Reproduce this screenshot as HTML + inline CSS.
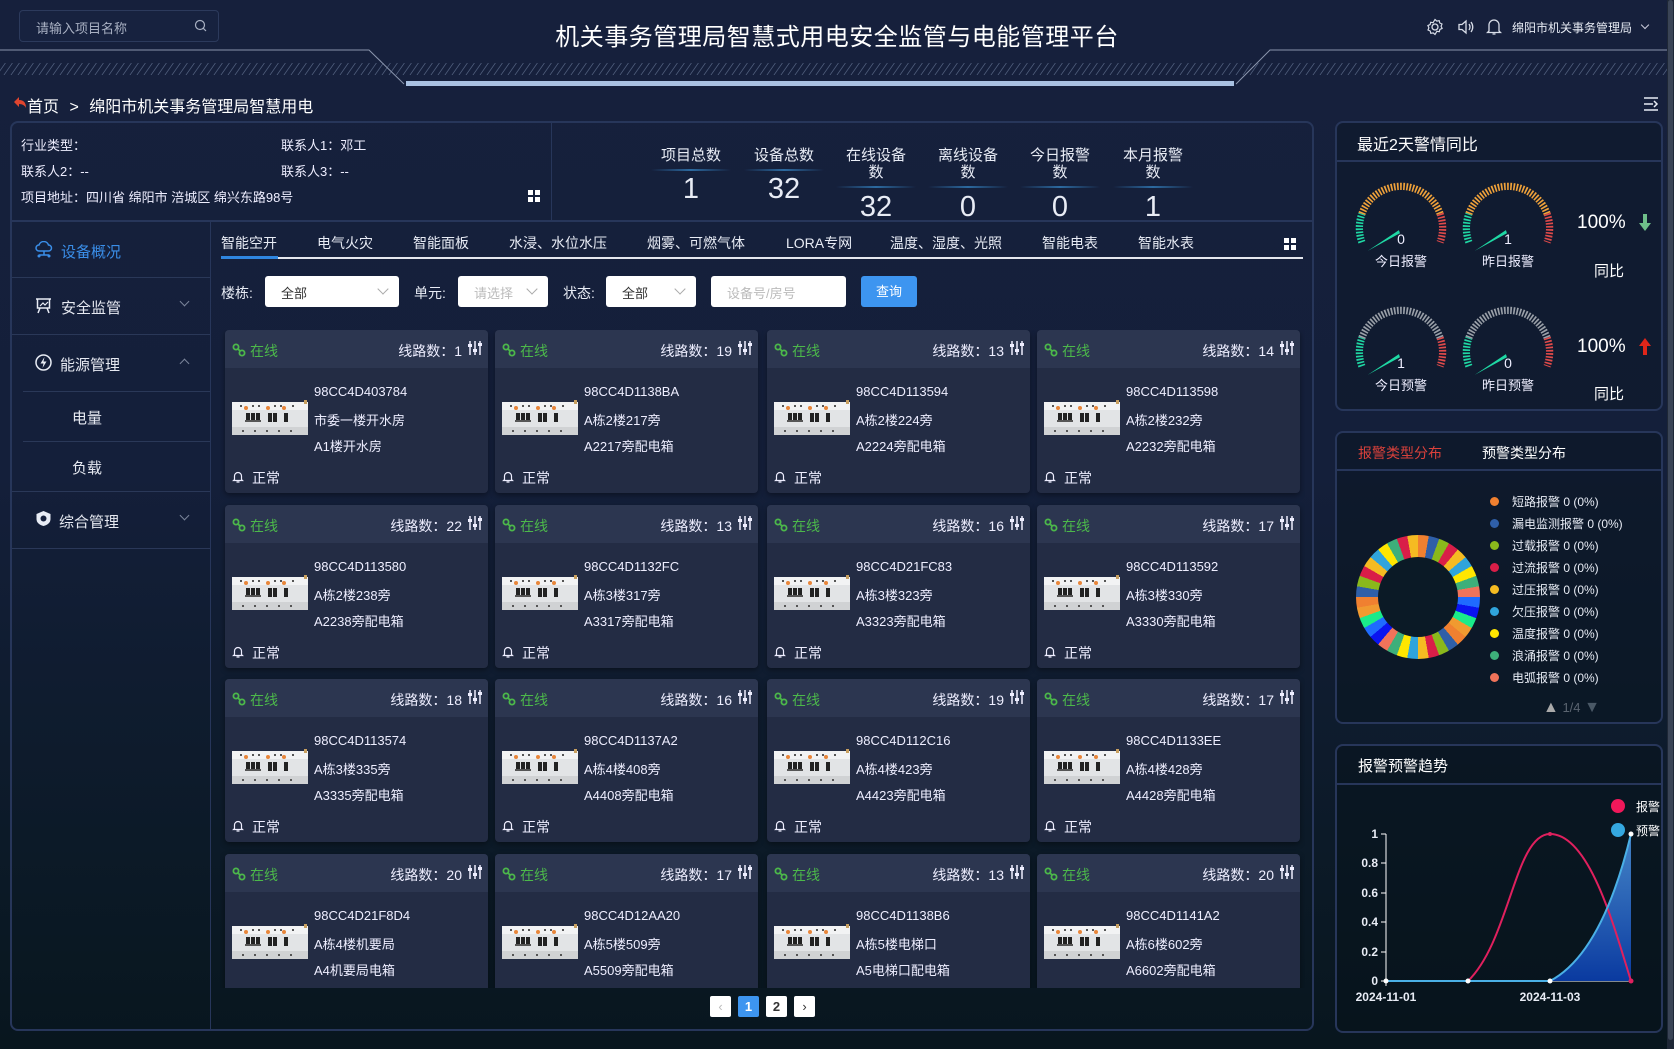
<!DOCTYPE html>
<html><head><meta charset="utf-8">
<style>
*{margin:0;padding:0;box-sizing:border-box}
body{width:1674px;height:1049px;overflow:hidden;font-family:"Liberation Sans","Noto Sans CJK SC",sans-serif;color:#fff;background:linear-gradient(180deg,#16203c 0%,#141f3a 45%,#0c1a28 80%,#08161e 100%);position:relative}
.a{position:absolute}
.search{left:19px;top:10px;width:200px;height:32px;border:1px solid #2c3a5c;border-radius:4px;background:#17223f;font-size:13px;color:#a9b1c3;padding:7px 0 0 16px}
.title{left:0;width:1674px;top:17px;text-align:center;font-size:24px;color:#fff;letter-spacing:0.5px}
.panel{border:2px solid #27365a;border-radius:8px}
.stat{width:90px;text-align:center;font-size:15px;line-height:17px;color:#e8ecf5}
.stat .n{position:absolute;left:0;width:90px;font-size:29px;font-family:"Liberation Sans Narrow","Liberation Sans",sans-serif}
.stat .ln{position:absolute;left:5px;width:80px;height:2px;background:linear-gradient(90deg,transparent,#2c6aa0,transparent)}
.side{font-size:15px;color:#e6e9f1}
.hr{height:1px;background:#2a3858}
.tab{font-size:14px;color:#e8ecf5;top:233px}
.sel{background:#fff;border-radius:3px;height:31px;top:276px;font-size:13px;color:#333;padding:7px 0 0 16px}
.sel i{position:absolute;right:12px;top:9px;width:8px;height:8px;border-right:1px solid #aaa;border-bottom:1px solid #aaa;transform:rotate(45deg)}
.lab{top:283px;font-size:14px;color:#e8ecf5}
.card{width:263px;height:163px;background:#232c44;border-radius:4px;box-shadow:0 2px 6px rgba(0,0,0,.4);overflow:hidden}
.card .h{height:38px;background:#2c3650;position:relative;font-size:14px}
.on{position:absolute;left:25px;top:11px;color:#4cb84a}
.lk{position:absolute;left:7px;top:13px}
.ln2{position:absolute;right:26px;top:11px;color:#eef}
.sl{position:absolute;right:6px;top:11px}
.card .t{position:absolute;left:89px;font-size:13px;color:#eef}
.brk{position:absolute;left:7px;top:70px;width:76px;height:38px}
.bell{position:absolute;left:7px;top:140px}
.st{position:absolute;left:27px;top:138px;font-size:14px;color:#eef}
.pg{top:996px;width:21px;height:21px;border-radius:2px;background:#fff;color:#333;font-size:13px;text-align:center;line-height:21px;font-weight:bold}
.leg{font-size:12px;color:#e8ecf5;left:1512px}
.dot{left:1490px;width:9px;height:9px;border-radius:50%}
.gl{font-size:13px;color:#eef;width:104px;text-align:center}
</style></head><body>

<svg class="a" style="left:0;top:0" width="1674" height="100">
<defs><pattern id="hp" width="7" height="14" patternUnits="userSpaceOnUse" patternTransform="skewX(-35)"><rect width="1" height="14" fill="#4d5b7a"/></pattern></defs>
<rect x="0" y="63" width="1674" height="12" fill="url(#hp)"/>
<polyline points="0,50 369,50 404,84" fill="none" stroke="#8a95ad" stroke-width="1"/>
<polyline points="1236,84 1270,50 1674,50" fill="none" stroke="#8a95ad" stroke-width="1"/>
<rect x="406" y="81" width="828" height="5" fill="#a9c1e2"/>
</svg>
<div class="a search">请输入项目名称</div>
<svg class="a" style="left:194px;top:19px" width="14" height="14" viewBox="0 0 14 14"><circle cx="6" cy="6" r="4.5" fill="none" stroke="#a9b1c3" stroke-width="1.2"/><line x1="9.3" y1="9.3" x2="12" y2="12" stroke="#a9b1c3" stroke-width="1.2"/></svg>
<div class="a title">机关事务管理局智慧式用电安全监管与电能管理平台</div>

<svg class="a" style="left:1426px;top:18px" width="18" height="18" viewBox="0 0 18 18"><circle cx="9" cy="9" r="3" fill="none" stroke="#d8dde8" stroke-width="1.3"/><path d="M9 1.5l1.8 1.6 2.4-.4.6 2.3 2.2 1-.9 2.2 1 2.2-2.2 1-.6 2.3-2.4-.4L9 16.5l-1.8-1.6-2.4.4-.6-2.3-2.2-1 .9-2.2-1-2.2 2.2-1 .6-2.3 2.4.4z" fill="none" stroke="#d8dde8" stroke-width="1.2"/></svg>
<svg class="a" style="left:1457px;top:18px" width="18" height="18" viewBox="0 0 18 18"><path d="M2 6.5h3l4-3.5v12l-4-3.5H2z" fill="none" stroke="#d8dde8" stroke-width="1.3"/><path d="M12 6q2 3 0 6M14 4q3.5 5 0 10" fill="none" stroke="#d8dde8" stroke-width="1.3"/></svg>
<svg class="a" style="left:1486px;top:17px" width="16" height="19" viewBox="0 0 16 19"><path d="M3 14V8a5 5 0 0110 0v6l1.5 1.5h-13z M6.5 17h3" fill="none" stroke="#d8dde8" stroke-width="1.3"/></svg>
<div class="a" style="left:1512px;top:19px;font-size:12px;color:#e8ecf5">绵阳市机关事务管理局</div>
<div class="a" style="left:1642px;top:22px;width:6px;height:6px;border-right:1px solid #ccd;border-bottom:1px solid #ccd;transform:rotate(45deg)"></div>
<div class="a" style="left:1667px;top:0;width:7px;height:1049px;background:#1e2736"></div>
<div class="a" style="left:1668px;top:0;width:5px;height:1040px;background:#3a4456;border-radius:3px"></div>

<svg class="a" style="left:13px;top:96px" width="14" height="13" viewBox="0 0 14 13"><path d="M6 1L1 6l5 5V8q5 0 7 4q0-8-7-8z" fill="#e0452f"/></svg>
<div class="a" style="left:27px;top:93px;font-size:16px;color:#fff">首页 <span style="margin:0 6px">&gt;</span> 绵阳市机关事务管理局智慧用电</div>
<svg class="a" style="left:1643px;top:97px" width="16" height="14"><path d="M1 1h14M1 7h9M1 13h14M11 4l3 3-3 3" fill="none" stroke="#e8ecf5" stroke-width="1.5"/></svg>

<div class="a panel" style="left:10px;top:121px;width:1304px;height:910px"></div>
<div class="a hr" style="left:11px;top:220px;width:1302px;height:2px;background:#27365a"></div>
<div class="a" style="left:551px;top:122px;width:1px;height:98px;background:#27365a"></div>
<div class="a" style="left:210px;top:221px;width:1px;height:808px;background:#27365a"></div>
<div class="a" style="left:21px;top:133px;font-size:13px;line-height:26px;color:#eef">行业类型：<br>联系人2：--<br>项目地址：四川省 绵阳市 涪城区 绵兴东路98号</div>
<div class="a" style="left:281px;top:133px;font-size:13px;line-height:26px;color:#eef">联系人1：邓工<br>联系人3：--</div>
<svg class="a" style="left:528px;top:190px" width="12" height="12"><rect x="0" y="0" width="5" height="5" fill="#fff"/><rect x="7" y="0" width="5" height="5" fill="#fff"/><rect x="0" y="7" width="5" height="5" fill="#fff"/><rect x="7" y="7" width="5" height="5" fill="#fff"/></svg>

<div class="a stat" style="left:646px;top:147px">项目总数<div class="ln" style="top:22px"></div><div class="n" style="top:34px">1</div></div>
<div class="a stat" style="left:739px;top:147px">设备总数<div class="ln" style="top:22px"></div><div class="n" style="top:34px">32</div></div>
<div class="a stat" style="left:831px;top:147px">在线设备<br>数<div class="ln" style="top:39px"></div><div class="n" style="top:52px">32</div></div>
<div class="a stat" style="left:923px;top:147px">离线设备<br>数<div class="ln" style="top:39px"></div><div class="n" style="top:52px">0</div></div>
<div class="a stat" style="left:1015px;top:147px">今日报警<br>数<div class="ln" style="top:39px"></div><div class="n" style="top:52px">0</div></div>
<div class="a stat" style="left:1108px;top:147px">本月报警<br>数<div class="ln" style="top:39px"></div><div class="n" style="top:52px">1</div></div>

<svg class="a" style="left:35px;top:241px" width="18" height="18" viewBox="0 0 18 18"><path d="M4 10a3 3 0 010-6 5 5 0 019.5 0 3 3 0 010 6z" fill="none" stroke="#3a8ee8" stroke-width="1.5"/><path d="M9 10v4M4 14h10" stroke="#3a8ee8" stroke-width="1.5"/><circle cx="4" cy="15" r="1.5" fill="#3a8ee8"/><circle cx="14" cy="15" r="1.5" fill="#3a8ee8"/></svg>
<div class="a side" style="left:61px;top:241px;color:#3a8ee8">设备概况</div>
<div class="a hr" style="left:12px;top:277px;width:198px"></div>
<svg class="a" style="left:35px;top:297px" width="17" height="17" viewBox="0 0 17 17"><path d="M1 2h15M2.5 2v9h12V2M5 11l-2 5M12 11l2 5" fill="none" stroke="#e8ecf5" stroke-width="1.5"/><path d="M5 9l3-3 2 2 3-3" fill="none" stroke="#e8ecf5" stroke-width="1.2"/></svg>
<div class="a side" style="left:61px;top:297px">安全监管</div>
<div class="a" style="left:181px;top:298px;width:7px;height:7px;border-right:1px solid #7a849a;border-bottom:1px solid #7a849a;transform:rotate(45deg)"></div>
<div class="a hr" style="left:12px;top:334px;width:198px"></div>
<svg class="a" style="left:34px;top:353px" width="19" height="19" viewBox="0 0 19 19"><circle cx="9.5" cy="9.5" r="7.5" fill="none" stroke="#e8ecf5" stroke-width="1.5"/><path d="M10.5 4L6.5 10.5h3l-1 4.5 4-6.5h-3z" fill="#e8ecf5"/></svg>
<div class="a side" style="left:60px;top:354px">能源管理</div>
<div class="a" style="left:181px;top:360px;width:7px;height:7px;border-left:1px solid #7a849a;border-top:1px solid #7a849a;transform:rotate(45deg)"></div>
<div class="a hr" style="left:23px;top:391px;width:187px"></div>
<div class="a side" style="left:72px;top:407px">电量</div>
<div class="a hr" style="left:23px;top:441px;width:187px"></div>
<div class="a side" style="left:72px;top:457px">负载</div>
<div class="a hr" style="left:12px;top:491px;width:198px"></div>
<svg class="a" style="left:35px;top:510px" width="17" height="17" viewBox="0 0 17 17"><path d="M8.5 1l7 3v5q0 5-7 7q-7-2-7-7V4z" fill="#e8ecf5"/><circle cx="8.5" cy="8.5" r="3" fill="#16213d"/></svg>
<div class="a side" style="left:59px;top:511px">综合管理</div>
<div class="a" style="left:181px;top:512px;width:7px;height:7px;border-right:1px solid #7a849a;border-bottom:1px solid #7a849a;transform:rotate(45deg)"></div>
<div class="a hr" style="left:12px;top:548px;width:198px"></div>

<div class="a tab" style="left:221px">智能空开</div>
<div class="a tab" style="left:317px">电气火灾</div>
<div class="a tab" style="left:413px">智能面板</div>
<div class="a tab" style="left:509px">水浸、水位水压</div>
<div class="a tab" style="left:647px">烟雾、可燃气体</div>
<div class="a tab" style="left:786px">LORA专网</div>
<div class="a tab" style="left:890px">温度、湿度、光照</div>
<div class="a tab" style="left:1042px">智能电表</div>
<div class="a tab" style="left:1138px">智能水表</div>
<svg class="a" style="left:1284px;top:238px" width="12" height="12"><rect x="0" y="0" width="5" height="5" fill="#fff"/><rect x="7" y="0" width="5" height="5" fill="#fff"/><rect x="0" y="7" width="5" height="5" fill="#fff"/><rect x="7" y="7" width="5" height="5" fill="#fff"/></svg>
<div class="a" style="left:221px;top:257px;width:1082px;height:2px;background:#e4e7ee"></div>
<div class="a" style="left:221px;top:256px;width:57px;height:3px;background:#2f86e0"></div>

<div class="a lab" style="left:221px">楼栋:</div>
<div class="a sel" style="left:265px;width:134px">全部<i></i></div>
<div class="a lab" style="left:414px">单元:</div>
<div class="a sel" style="left:458px;width:90px;color:#bbb">请选择<i></i></div>
<div class="a lab" style="left:563px">状态:</div>
<div class="a sel" style="left:606px;width:90px">全部<i></i></div>
<div class="a sel" style="left:711px;width:135px;color:#bbb">设备号/房号</div>
<div class="a" style="left:861px;top:276px;width:56px;height:31px;background:#3d95f0;border-radius:3px;font-size:13px;text-align:center;line-height:31px">查询</div>

<svg width="0" height="0" style="position:absolute">
<defs>
<symbol id="link" viewBox="0 0 14 14"><circle cx="4" cy="4" r="2.6" fill="none" stroke="#4cb84a" stroke-width="1.8"/><circle cx="10" cy="10" r="2.6" fill="none" stroke="#4cb84a" stroke-width="1.8"/><line x1="5.5" y1="5.5" x2="8.5" y2="8.5" stroke="#4cb84a" stroke-width="1.8"/></symbol>
<symbol id="sld" viewBox="0 0 14 14"><path d="M2 0v14M7 0v14M12 0v14" stroke="#eef" stroke-width="1.5"/><rect x="0" y="3" width="4" height="3" fill="#eef"/><rect x="5" y="8" width="4" height="3" fill="#eef"/><rect x="10" y="2" width="4" height="3" fill="#eef"/></symbol>
<symbol id="bl" viewBox="0 0 12 13"><path d="M2.5 9.5V6a3.5 3.5 0 017 0v3.5l1 1h-9z M4.5 12h3" fill="none" stroke="#eef" stroke-width="1.2"/></symbol>
<symbol id="br" viewBox="0 0 76 38"><rect x="0" y="2" width="76" height="33" rx="2" fill="#e2e4e6"/><rect x="0" y="2" width="76" height="8" fill="#f2f3f4"/><rect x="0" y="27" width="76" height="8" fill="#d0d2d4"/><g fill="#222"><rect x="14" y="13" width="4" height="9"/><rect x="19" y="13" width="4" height="9"/><rect x="24" y="13" width="4" height="9"/><rect x="36" y="13" width="4" height="9"/><rect x="41" y="13" width="4" height="9"/><rect x="52" y="13" width="4" height="9"/></g><rect x="13" y="20" width="16" height="2" fill="#555"/><circle cx="14" cy="8" r="2" fill="#e8863a"/><circle cx="36" cy="8" r="2" fill="#e8863a"/><circle cx="52" cy="8" r="2" fill="#e8863a"/><g fill="#555"><rect x="8" y="5" width="2" height="2"/><rect x="20" y="5" width="2" height="2"/><rect x="26" y="5" width="2" height="2"/><rect x="42" y="5" width="2" height="2"/><rect x="48" y="5" width="2" height="2"/><rect x="60" y="5" width="2" height="2"/><rect x="10" y="30" width="2" height="2"/><rect x="22" y="30" width="2" height="2"/><rect x="34" y="30" width="2" height="2"/><rect x="46" y="30" width="2" height="2"/><rect x="58" y="30" width="2" height="2"/></g><rect x="72" y="0" width="3" height="4" fill="#c8a060"/></symbol>
</defs></svg>

<div class="a" style="left:220px;top:330px;width:1085px;height:658px;overflow:hidden">
<div class="a card" style="left:5px;top:0"><div class="h"><svg class="lk" width="14" height="14"><use href="#link"/></svg><span class="on">在线</span><span class="ln2">线路数：1</span><svg class="sl" width="14" height="14"><use href="#sld"/></svg></div><svg class="brk"><use href="#br"/></svg><div class="t" style="top:54px">98CC4D403784</div><div class="t" style="top:80px">市委一楼开水房</div><div class="t" style="top:106px">A1楼开水房</div><svg class="bell" width="12" height="13"><use href="#bl"/></svg><div class="st">正常</div></div>
<div class="a card" style="left:275px;top:0"><div class="h"><svg class="lk" width="14" height="14"><use href="#link"/></svg><span class="on">在线</span><span class="ln2">线路数：19</span><svg class="sl" width="14" height="14"><use href="#sld"/></svg></div><svg class="brk"><use href="#br"/></svg><div class="t" style="top:54px">98CC4D1138BA</div><div class="t" style="top:80px">A栋2楼217旁</div><div class="t" style="top:106px">A2217旁配电箱</div><svg class="bell" width="12" height="13"><use href="#bl"/></svg><div class="st">正常</div></div>
<div class="a card" style="left:547px;top:0"><div class="h"><svg class="lk" width="14" height="14"><use href="#link"/></svg><span class="on">在线</span><span class="ln2">线路数：13</span><svg class="sl" width="14" height="14"><use href="#sld"/></svg></div><svg class="brk"><use href="#br"/></svg><div class="t" style="top:54px">98CC4D113594</div><div class="t" style="top:80px">A栋2楼224旁</div><div class="t" style="top:106px">A2224旁配电箱</div><svg class="bell" width="12" height="13"><use href="#bl"/></svg><div class="st">正常</div></div>
<div class="a card" style="left:817px;top:0"><div class="h"><svg class="lk" width="14" height="14"><use href="#link"/></svg><span class="on">在线</span><span class="ln2">线路数：14</span><svg class="sl" width="14" height="14"><use href="#sld"/></svg></div><svg class="brk"><use href="#br"/></svg><div class="t" style="top:54px">98CC4D113598</div><div class="t" style="top:80px">A栋2楼232旁</div><div class="t" style="top:106px">A2232旁配电箱</div><svg class="bell" width="12" height="13"><use href="#bl"/></svg><div class="st">正常</div></div>
<div class="a card" style="left:5px;top:175px"><div class="h"><svg class="lk" width="14" height="14"><use href="#link"/></svg><span class="on">在线</span><span class="ln2">线路数：22</span><svg class="sl" width="14" height="14"><use href="#sld"/></svg></div><svg class="brk"><use href="#br"/></svg><div class="t" style="top:54px">98CC4D113580</div><div class="t" style="top:80px">A栋2楼238旁</div><div class="t" style="top:106px">A2238旁配电箱</div><svg class="bell" width="12" height="13"><use href="#bl"/></svg><div class="st">正常</div></div>
<div class="a card" style="left:275px;top:175px"><div class="h"><svg class="lk" width="14" height="14"><use href="#link"/></svg><span class="on">在线</span><span class="ln2">线路数：13</span><svg class="sl" width="14" height="14"><use href="#sld"/></svg></div><svg class="brk"><use href="#br"/></svg><div class="t" style="top:54px">98CC4D1132FC</div><div class="t" style="top:80px">A栋3楼317旁</div><div class="t" style="top:106px">A3317旁配电箱</div><svg class="bell" width="12" height="13"><use href="#bl"/></svg><div class="st">正常</div></div>
<div class="a card" style="left:547px;top:175px"><div class="h"><svg class="lk" width="14" height="14"><use href="#link"/></svg><span class="on">在线</span><span class="ln2">线路数：16</span><svg class="sl" width="14" height="14"><use href="#sld"/></svg></div><svg class="brk"><use href="#br"/></svg><div class="t" style="top:54px">98CC4D21FC83</div><div class="t" style="top:80px">A栋3楼323旁</div><div class="t" style="top:106px">A3323旁配电箱</div><svg class="bell" width="12" height="13"><use href="#bl"/></svg><div class="st">正常</div></div>
<div class="a card" style="left:817px;top:175px"><div class="h"><svg class="lk" width="14" height="14"><use href="#link"/></svg><span class="on">在线</span><span class="ln2">线路数：17</span><svg class="sl" width="14" height="14"><use href="#sld"/></svg></div><svg class="brk"><use href="#br"/></svg><div class="t" style="top:54px">98CC4D113592</div><div class="t" style="top:80px">A栋3楼330旁</div><div class="t" style="top:106px">A3330旁配电箱</div><svg class="bell" width="12" height="13"><use href="#bl"/></svg><div class="st">正常</div></div>
<div class="a card" style="left:5px;top:349px"><div class="h"><svg class="lk" width="14" height="14"><use href="#link"/></svg><span class="on">在线</span><span class="ln2">线路数：18</span><svg class="sl" width="14" height="14"><use href="#sld"/></svg></div><svg class="brk"><use href="#br"/></svg><div class="t" style="top:54px">98CC4D113574</div><div class="t" style="top:80px">A栋3楼335旁</div><div class="t" style="top:106px">A3335旁配电箱</div><svg class="bell" width="12" height="13"><use href="#bl"/></svg><div class="st">正常</div></div>
<div class="a card" style="left:275px;top:349px"><div class="h"><svg class="lk" width="14" height="14"><use href="#link"/></svg><span class="on">在线</span><span class="ln2">线路数：16</span><svg class="sl" width="14" height="14"><use href="#sld"/></svg></div><svg class="brk"><use href="#br"/></svg><div class="t" style="top:54px">98CC4D1137A2</div><div class="t" style="top:80px">A栋4楼408旁</div><div class="t" style="top:106px">A4408旁配电箱</div><svg class="bell" width="12" height="13"><use href="#bl"/></svg><div class="st">正常</div></div>
<div class="a card" style="left:547px;top:349px"><div class="h"><svg class="lk" width="14" height="14"><use href="#link"/></svg><span class="on">在线</span><span class="ln2">线路数：19</span><svg class="sl" width="14" height="14"><use href="#sld"/></svg></div><svg class="brk"><use href="#br"/></svg><div class="t" style="top:54px">98CC4D112C16</div><div class="t" style="top:80px">A栋4楼423旁</div><div class="t" style="top:106px">A4423旁配电箱</div><svg class="bell" width="12" height="13"><use href="#bl"/></svg><div class="st">正常</div></div>
<div class="a card" style="left:817px;top:349px"><div class="h"><svg class="lk" width="14" height="14"><use href="#link"/></svg><span class="on">在线</span><span class="ln2">线路数：17</span><svg class="sl" width="14" height="14"><use href="#sld"/></svg></div><svg class="brk"><use href="#br"/></svg><div class="t" style="top:54px">98CC4D1133EE</div><div class="t" style="top:80px">A栋4楼428旁</div><div class="t" style="top:106px">A4428旁配电箱</div><svg class="bell" width="12" height="13"><use href="#bl"/></svg><div class="st">正常</div></div>
<div class="a card" style="left:5px;top:524px"><div class="h"><svg class="lk" width="14" height="14"><use href="#link"/></svg><span class="on">在线</span><span class="ln2">线路数：20</span><svg class="sl" width="14" height="14"><use href="#sld"/></svg></div><svg class="brk"><use href="#br"/></svg><div class="t" style="top:54px">98CC4D21F8D4</div><div class="t" style="top:80px">A栋4楼机要局</div><div class="t" style="top:106px">A4机要局电箱</div></div>
<div class="a card" style="left:275px;top:524px"><div class="h"><svg class="lk" width="14" height="14"><use href="#link"/></svg><span class="on">在线</span><span class="ln2">线路数：17</span><svg class="sl" width="14" height="14"><use href="#sld"/></svg></div><svg class="brk"><use href="#br"/></svg><div class="t" style="top:54px">98CC4D12AA20</div><div class="t" style="top:80px">A栋5楼509旁</div><div class="t" style="top:106px">A5509旁配电箱</div></div>
<div class="a card" style="left:547px;top:524px"><div class="h"><svg class="lk" width="14" height="14"><use href="#link"/></svg><span class="on">在线</span><span class="ln2">线路数：13</span><svg class="sl" width="14" height="14"><use href="#sld"/></svg></div><svg class="brk"><use href="#br"/></svg><div class="t" style="top:54px">98CC4D1138B6</div><div class="t" style="top:80px">A栋5楼电梯口</div><div class="t" style="top:106px">A5电梯口配电箱</div></div>
<div class="a card" style="left:817px;top:524px"><div class="h"><svg class="lk" width="14" height="14"><use href="#link"/></svg><span class="on">在线</span><span class="ln2">线路数：20</span><svg class="sl" width="14" height="14"><use href="#sld"/></svg></div><svg class="brk"><use href="#br"/></svg><div class="t" style="top:54px">98CC4D1141A2</div><div class="t" style="top:80px">A栋6楼602旁</div><div class="t" style="top:106px">A6602旁配电箱</div></div>
</div>

<div class="a pg" style="left:710px;color:#bbb;font-weight:normal">&lsaquo;</div>
<div class="a pg" style="left:738px;background:#3d95f0;color:#fff">1</div>
<div class="a pg" style="left:766px">2</div>
<div class="a pg" style="left:794px;font-weight:normal">&rsaquo;</div>

<div class="a panel" style="left:1335px;top:121px;width:328px;height:290px;background:rgba(10,22,36,.45)"></div>
<div class="a" style="left:1336px;top:160px;width:326px;height:2px;background:#27365a"></div>
<div class="a" style="left:1357px;top:131px;font-size:16px">最近2天警情同比</div>

<svg width="0" height="0" style="position:absolute"><defs>
<symbol id="g1" viewBox="0 0 100 100">
<g fill="none" stroke-width="7" stroke-dasharray="1.6 1.4">
<path d="M12.4 63.7A40 40 0 0 1 12.4 36.3" stroke="#1fd8a4"/>
<path d="M12.4 36.3A40 40 0 0 1 87.6 36.3" stroke="#f0a23a"/>
<path d="M87.6 36.3A40 40 0 0 1 87.6 63.7" stroke="#e04a4a"/></g>
<polygon points="18,72 48,52 49,55" fill="#1fd8a4"/></symbol>
<symbol id="g2" viewBox="0 0 100 100">
<g fill="none" stroke-width="7" stroke-dasharray="1.6 1.4">
<path d="M12.4 63.7A40 40 0 0 1 12.4 36.3" stroke="#1fd8a4"/>
<path d="M12.4 36.3A40 40 0 0 1 87.6 36.3" stroke="#9aa0a8"/>
<path d="M87.6 36.3A40 40 0 0 1 87.6 63.7" stroke="#e04a4a"/></g>
<polygon points="18,72 48,52 49,55" fill="#1fd8a4"/></symbol>
</defs></svg>
<svg class="a" style="left:1349px;top:176px" width="104" height="104"><use href="#g1"/></svg>
<svg class="a" style="left:1456px;top:176px" width="104" height="104"><use href="#g1"/></svg>
<svg class="a" style="left:1349px;top:300px" width="104" height="104"><use href="#g2"/></svg>
<svg class="a" style="left:1456px;top:300px" width="104" height="104"><use href="#g2"/></svg>
<div class="a gl" style="left:1349px;top:231px;font-size:14px">0</div>
<div class="a gl" style="left:1456px;top:231px;font-size:14px">1</div>
<div class="a gl" style="left:1349px;top:251px">今日报警</div>
<div class="a gl" style="left:1456px;top:251px">昨日报警</div>
<div class="a gl" style="left:1349px;top:355px;font-size:14px">1</div>
<div class="a gl" style="left:1456px;top:355px;font-size:14px">0</div>
<div class="a gl" style="left:1349px;top:375px">今日预警</div>
<div class="a gl" style="left:1456px;top:375px">昨日预警</div>
<div class="a" style="left:1577px;top:212px;font-size:19px">100%</div>
<svg class="a" style="left:1639px;top:214px" width="12" height="17"><path d="M4 0h4v9h4l-6 8-6-8h4z" fill="#6fbf8a"/></svg>
<div class="a" style="left:1594px;top:260px;font-size:15px">同比</div>
<div class="a" style="left:1577px;top:336px;font-size:19px">100%</div>
<svg class="a" style="left:1639px;top:338px" width="12" height="17"><path d="M4 17h4V8h4L6 0 0 8h4z" fill="#e0261a"/></svg>
<div class="a" style="left:1594px;top:383px;font-size:15px">同比</div>

<div class="a panel" style="left:1335px;top:431px;width:328px;height:293px;background:rgba(8,20,30,.5)"></div>
<div class="a" style="left:1336px;top:469px;width:326px;height:2px;background:#27365a"></div>
<div class="a" style="left:1358px;top:443px;font-size:14px;color:#d9413b">报警类型分布</div>
<div class="a" style="left:1482px;top:443px;font-size:14px;color:#fff">预警类型分布</div>
<div class="a" style="left:1356px;top:535px;width:124px;height:124px;border-radius:50%;background:conic-gradient(#f08030 0 10deg,#2f5fa8 10deg 20deg,#8ab81c 20deg 30deg,#d91e48 30deg 40deg,#f5bb22 40deg 50deg,#30a4dc 50deg 60deg,#ffe600 60deg 70deg,#3daf7a 70deg 80deg,#f0735a 80deg 90deg,#1f6bff 90deg 100deg,#0a14f0 100deg 110deg,#1aeb8a 110deg 120deg,#f09a30 120deg 130deg,#f08030 130deg 140deg,#2f5fa8 140deg 150deg,#8ab81c 150deg 160deg,#d91e48 160deg 170deg,#f5bb22 170deg 180deg,#30a4dc 180deg 190deg,#ffe600 190deg 200deg,#3daf7a 200deg 210deg,#f0735a 210deg 220deg,#0a14f0 220deg 230deg,#1f6bff 230deg 240deg,#1aeb8a 240deg 250deg,#f09a30 250deg 260deg,#f08030 260deg 270deg,#2f5fa8 270deg 280deg,#8ab81c 280deg 290deg,#d91e48 290deg 300deg,#f5bb22 300deg 310deg,#30a4dc 310deg 320deg,#ffe600 320deg 330deg,#3daf7a 330deg 340deg,#d91e48 340deg 350deg,#f5bb22 350deg 360deg)"></div>
<div class="a" style="left:1378px;top:557px;width:80px;height:80px;border-radius:50%;background:#0b1a26"></div>
<div class="a dot" style="top:497px;background:#f08030"></div><div class="a leg" style="top:493px">短路报警 0 (0%)</div>
<div class="a dot" style="top:519px;background:#2f5fa8"></div><div class="a leg" style="top:515px">漏电监测报警 0 (0%)</div>
<div class="a dot" style="top:541px;background:#8ab81c"></div><div class="a leg" style="top:537px">过载报警 0 (0%)</div>
<div class="a dot" style="top:563px;background:#d91e48"></div><div class="a leg" style="top:559px">过流报警 0 (0%)</div>
<div class="a dot" style="top:585px;background:#f5bb22"></div><div class="a leg" style="top:581px">过压报警 0 (0%)</div>
<div class="a dot" style="top:607px;background:#30a4dc"></div><div class="a leg" style="top:603px">欠压报警 0 (0%)</div>
<div class="a dot" style="top:629px;background:#ffe600"></div><div class="a leg" style="top:625px">温度报警 0 (0%)</div>
<div class="a dot" style="top:651px;background:#3daf7a"></div><div class="a leg" style="top:647px">浪涌报警 0 (0%)</div>
<div class="a dot" style="top:673px;background:#f0735a"></div><div class="a leg" style="top:669px">电弧报警 0 (0%)</div>
<div class="a" style="left:1543px;top:699px;font-size:13px;color:#5a6470">
<span style="color:#aaa;font-size:16px">▲</span> 1/4 <span style="color:#4a5866;font-size:16px">▼</span></div>

<div class="a panel" style="left:1335px;top:744px;width:328px;height:289px;background:rgba(6,18,26,.5)"></div>
<div class="a" style="left:1336px;top:783px;width:326px;height:2px;background:#27365a"></div>
<div class="a" style="left:1358px;top:755px;font-size:15px">报警预警趋势</div>
<svg class="a" style="left:1336px;top:786px" width="326" height="240" viewBox="1336 786 326 240">
<defs><linearGradient id="bf" x1="0" y1="0" x2="0" y2="1"><stop offset="0" stop-color="#4a8fd8" stop-opacity=".9"/><stop offset="1" stop-color="#0a3aa0"/></linearGradient></defs>
<circle cx="1618" cy="806" r="7" fill="#f0185a"/><circle cx="1618" cy="830" r="7" fill="#35a8e0"/>
<text x="1636" y="811" font-size="12" fill="#fff" font-family="Liberation Sans,Noto Sans CJK SC,sans-serif">报警</text>
<text x="1636" y="835" font-size="12" fill="#fff" font-family="Liberation Sans,Noto Sans CJK SC,sans-serif">预警</text>
<g stroke="#fff" stroke-width="1"><line x1="1386" y1="834" x2="1386" y2="986"/><line x1="1381" y1="834" x2="1386" y2="834"/><line x1="1381" y1="863" x2="1386" y2="863"/><line x1="1381" y1="893" x2="1386" y2="893"/><line x1="1381" y1="922" x2="1386" y2="922"/><line x1="1381" y1="952" x2="1386" y2="952"/><line x1="1381" y1="981" x2="1386" y2="981"/><line x1="1386" y1="981" x2="1631" y2="981"/></g>
<g font-size="12" fill="#e8ecf5" text-anchor="end" font-weight="bold" font-family="Liberation Sans,sans-serif"><text x="1378" y="838">1</text><text x="1378" y="867">0.8</text><text x="1378" y="897">0.6</text><text x="1378" y="926">0.4</text><text x="1378" y="956">0.2</text><text x="1378" y="985">0</text></g>
<g font-size="12" fill="#e8ecf5" text-anchor="middle" font-weight="bold" font-family="Liberation Sans,sans-serif"><text x="1386" y="1001">2024-11-01</text><text x="1550" y="1001">2024-11-03</text></g>
<path d="M1550 981C1590 960 1615 900 1631 834L1631 981Z" fill="url(#bf)"/>
<path d="M1386 981L1468 981C1510 940 1515 834 1550 834C1590 834 1615 930 1631 981" fill="none" stroke="#e0205e" stroke-width="2"/>
<path d="M1386 981L1550 981C1590 960 1615 900 1631 834" fill="none" stroke="#4ab0e6" stroke-width="2"/>
<g fill="#fff"><circle cx="1386" cy="981" r="2.5"/><circle cx="1468" cy="981" r="2.5"/><circle cx="1550" cy="981" r="2.5"/><circle cx="1631" cy="834" r="2.5"/></g>
<circle cx="1631" cy="981" r="2.5" fill="#e0205e"/><circle cx="1550" cy="834" r="2" fill="#e0205e"/>
</svg>
</body></html>
